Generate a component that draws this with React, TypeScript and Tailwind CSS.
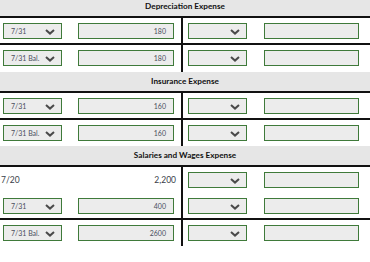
import React from 'react';

type Cell =
    | { kind: 'select'; label: string; value: string }
    | { kind: 'plain'; date: string; amount: string };

type Section = { title: string; lastH: string; rows: Cell[] };

const sections: Section[] = [
    {
        title: 'Depreciation Expense',
        lastH: 'h-[27px]',
        rows: [
            { kind: 'select', label: '7/31', value: '180' },
            { kind: 'select', label: '7/31 Bal.', value: '180' },
        ],
    },
    {
        title: 'Insurance Expense',
        lastH: 'h-[26px]',
        rows: [
            { kind: 'select', label: '7/31', value: '160' },
            { kind: 'select', label: '7/31 Bal.', value: '160' },
        ],
    },
    {
        title: 'Salaries and Wages Expense',
        lastH: 'h-[26px]',
        rows: [
            { kind: 'plain', date: '7/20', amount: '2,200' },
            { kind: 'select', label: '7/31', value: '400' },
            { kind: 'select', label: '7/31 Bal.', value: '2600' },
        ],
    },
];

const fieldBox = "h-[16px] border border-[#3f7a3a] bg-[#ececec]";

function Chevron() {
    return (
        <svg width="10" height="6" viewBox="0 0 10 6" className="absolute right-[6px] top-[5px]">
            <polyline points="1,1 5,4.6 9,1" fill="none" stroke="#4a4a4a" strokeWidth="2" />
        </svg>
    );
}

function FakeSelect({ label }: { label?: string }) {
    return (
        <div className={`relative w-[59px] ${fieldBox} pl-[7px] text-[7px] leading-[14px] text-[#4a4f5c]`}>
            {label}
            <Chevron />
        </div>
    );
}

function FakeInput({ value, width }: { value?: string; width: string }) {
    return (
        <div className={`${width} ${fieldBox} pr-[7px] text-right text-[7px] leading-[14px] text-[#4a4f5c]`}>
            {value}
        </div>
    );
}

export default function App() {
    return (
        <div className="w-[370px] h-[262px] overflow-hidden bg-white font-['Lato',sans-serif]">
            <div className="-mt-[3px]">
                {sections.map((sec) => (
                    <div key={sec.title}>
                        {/* section title */}
                        <div className="h-[21px] bg-[#e6e6e6] border-b-2 border-[#111] flex items-center justify-center text-[8.2px] font-bold text-[#111]">
                            {sec.title}
                        </div>
                        {sec.rows.map((row, i) => {
                            const last = i === sec.rows.length - 1;
                            const ruled = !last && row.kind === 'select';
                            const h = last ? sec.lastH : row.kind === 'plain' ? 'h-[26px]' : 'h-[25px]';
                            return (
                                <div key={i} className={`flex ${ruled ? 'border-b-2 border-[#111]' : ''}`}>
                                    {/* debit side */}
                                    <div className={`w-[183px] border-r-2 border-[#111] ${h} pt-[5px]`}>
                                        {row.kind === 'select' ? (
                                            <div className="flex pl-[3px] gap-[16px]">
                                                <FakeSelect label={row.label} />
                                                <FakeInput value={row.value} width="w-[96px]" />
                                            </div>
                                        ) : (
                                            <div className="flex justify-between pl-[1px] pr-[5px] pt-[2px] text-[8.5px] leading-[12px] text-[#3a3f4a]">
                                                <span>{row.date}</span>
                                                <span>{row.amount}</span>
                                            </div>
                                        )}
                                    </div>
                                    {/* credit side */}
                                    <div className="flex-1 pt-[5px] pl-[5px] flex gap-[17px]">
                                        <FakeSelect />
                                        <FakeInput width="w-[95px]" />
                                    </div>
                                </div>
                            );
                        })}
                    </div>
                ))}
            </div>
        </div>
    );
}
